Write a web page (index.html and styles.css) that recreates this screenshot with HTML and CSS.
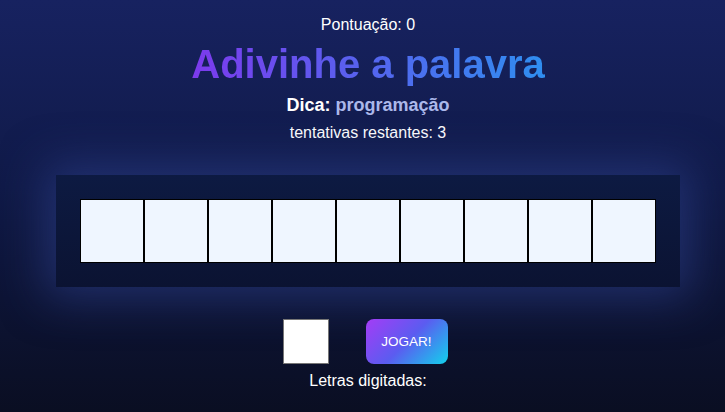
FILE: index.html
```html
<!DOCTYPE html>
<html lang="pt">
<head>
<meta charset="utf-8">
<title>Adivinhe a palavra</title>
<link rel="stylesheet" href="styles.css">
</head>
<body>
<main class="game">
  <p class="score">Pontuação: 0</p>
  <h1 class="title">Adivinhe a palavra</h1>
  <p class="hint"><strong>Dica:</strong> <span class="hint-word">programação</span></p>
  <p class="tries">tentativas restantes: 3</p>
  <section class="board">
    <div class="tile"></div><div class="tile"></div><div class="tile"></div>
    <div class="tile"></div><div class="tile"></div><div class="tile"></div>
    <div class="tile"></div><div class="tile"></div><div class="tile"></div>
  </section>
  <div class="controls">
    <input class="letter" type="text" maxlength="1">
    <button class="play">JOGAR!</button>
  </div>
  <p class="typed">Letras digitadas:</p>
</main>
</body>
</html>
```
FILE: styles.css
```css
html, body {
  margin: 0;
  height: 100%;
}
body {
  background: linear-gradient(to bottom, #172260 0%, #101a48 45%, #0a0e22 100%);
  font-family: "Liberation Sans", Arial, sans-serif;
  color: #ffffff;
  overflow: hidden;
}
.game {
  display: flex;
  flex-direction: column;
  align-items: center;
  padding-top: 16px;
  padding-left: 11px;
}
.score {
  margin: 0;
  font-size: 16px;
  line-height: 18px;
}
.title {
  margin: 7px 0 0;
  font-size: 40px;
  line-height: 46px;
  font-weight: bold;
  background: linear-gradient(to right, #7c3aed, #2f8ef0);
  -webkit-background-clip: text;
  background-clip: text;
  color: transparent;
}
.hint {
  margin: 8px 0 0;
  font-size: 18px;
  line-height: 21px;
}
.hint strong { color: #ffffff; }
.hint-word {
  font-weight: bold;
  color: #abb8ea;
}
.tries {
  margin: 8px 0 0;
  font-size: 16px;
  line-height: 18px;
}
.board {
  margin-top: 33px;
  display: flex;
  padding: 24px;
  background: linear-gradient(to bottom, #0d1a42, #0b1332);
  box-shadow: 0 0 45px 10px rgba(50, 70, 150, 0.55);
}
.tile {
  width: 62px;
  height: 62px;
  border: 1px solid #000;
  background: #eff6ff;
}
.controls {
  margin-top: 32px;
  margin-right: 6px;
  display: flex;
  align-items: center;
  gap: 37px;
}
.letter {
  box-sizing: border-box;
  width: 46px;
  height: 45px;
  margin: 0;
  border: 1px solid #767676;
  background: #fff;
  padding: 0;
}
.play {
  width: 82px;
  height: 45px;
  border: none;
  border-radius: 8px;
  background: linear-gradient(135deg, #a43cf6 0%, #5b5cf0 50%, #12d2ec 100%);
  color: #fff;
  font-family: "Liberation Sans", Arial, sans-serif;
  font-size: 13.5px;
  cursor: pointer;
}
.typed {
  margin: 8px 0 0;
  font-size: 16px;
  line-height: 18px;
}
```
